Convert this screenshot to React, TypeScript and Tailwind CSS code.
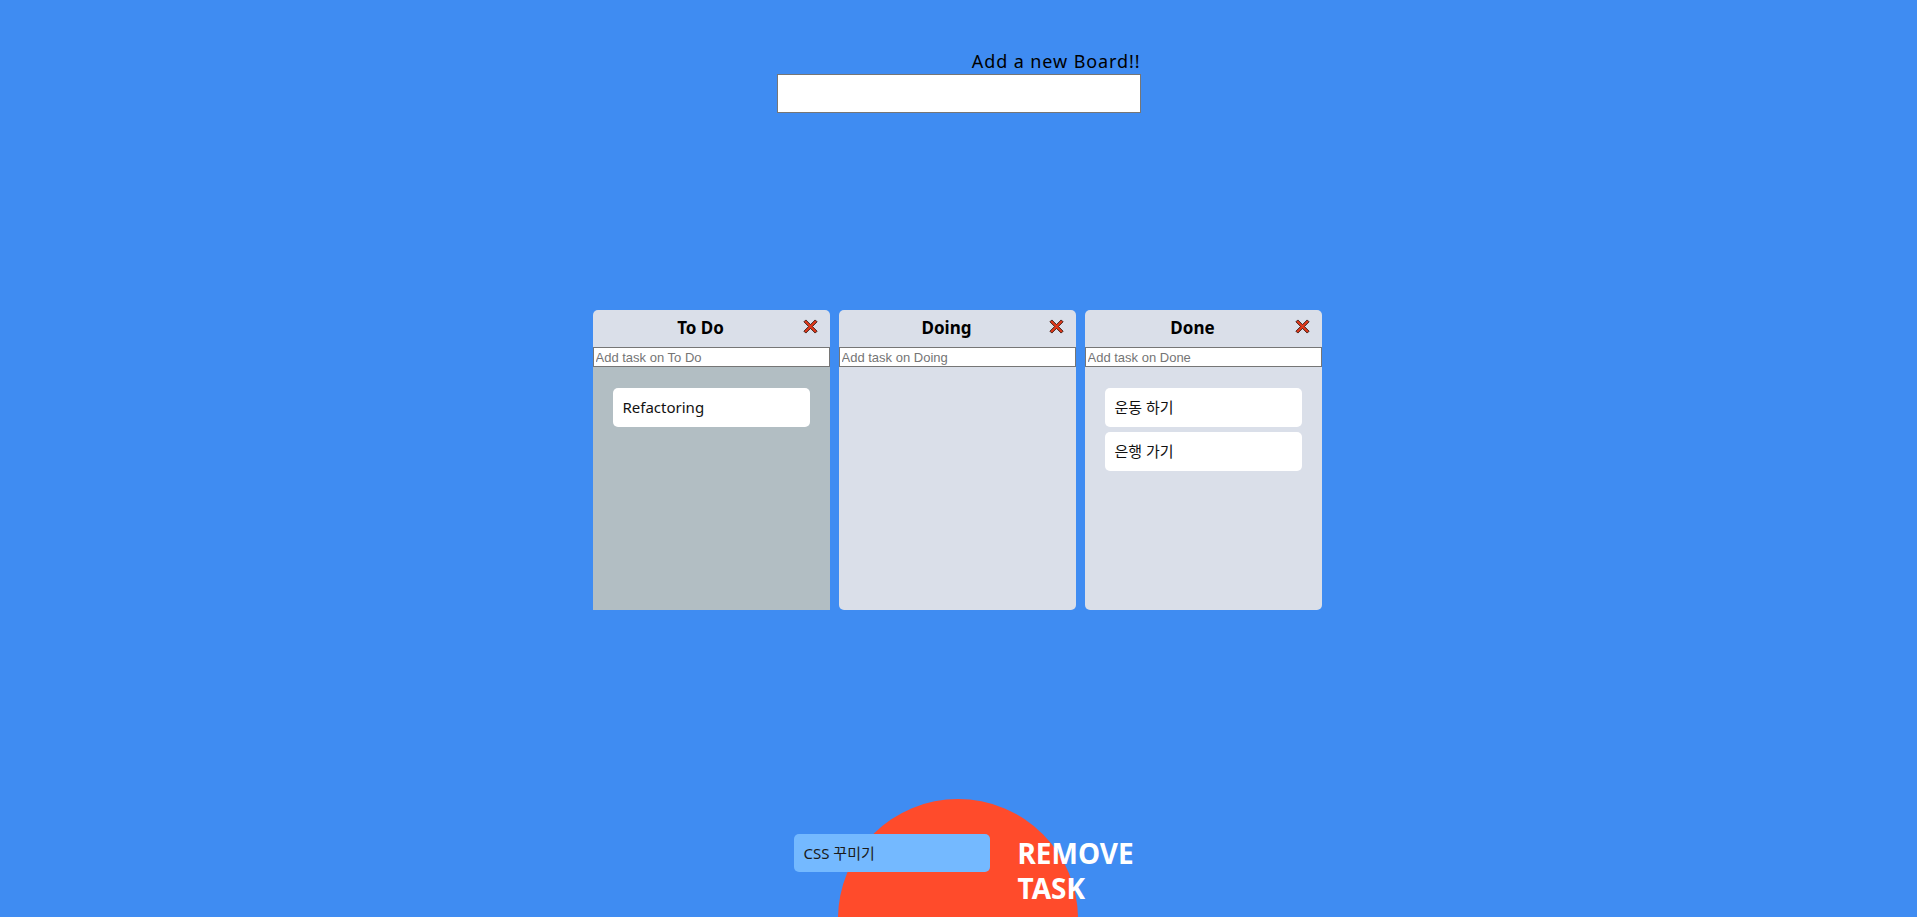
import React from "react";

type Board = { title: string; tasks: string[]; over?: boolean };

const boards: Board[] = [
  { title: "To Do", tasks: ["Refactoring"], over: true },
  { title: "Doing", tasks: [] },
  { title: "Done", tasks: ["운동 하기", "은행 가기"] },
];

const font = { fontFamily: '"Noto Sans", "Noto Sans CJK KR", sans-serif' };

const CrossIcon = () => (
  <svg width="15" height="15" viewBox="-1 -1 16 16">
    <polygon
      points="2,0 7,5 12,0 14,2 9,7 14,12 12,14 7,9 2,14 0,12 5,7 0,2"
      fill="#e2391b"
      stroke="#3b1a12"
      strokeWidth="1"
      strokeLinejoin="miter"
    />
  </svg>
);

const BoardColumn = ({ board }: { board: Board }) => (
  <div className="w-[237px] h-[300px] flex flex-col bg-[#dadfe9] rounded-[5px]">
    <div className="h-[37px] flex items-center">
      <h2 className="flex-1 pl-[6px] mb-[2px] text-center text-[17px] font-bold text-black">
        {board.title}
      </h2>
      <button className="w-[15px] h-[15px] mr-[12px] mb-[5px] flex items-center justify-center">
        <CrossIcon />
      </button>
    </div>
    <input
      className="w-full h-[20px] px-[2px] border border-[#767676] bg-white text-[13px] text-black placeholder:text-[#757575] outline-none"
      style={{ fontFamily: '"Liberation Sans", Arial, sans-serif' }}
      placeholder={`Add task on ${board.title}`}
    />
    <div
      className={`flex-1 flex flex-col gap-[5px] px-[20px] pt-[21px] pb-[20px] ${
        board.over ? "bg-[#b2bec3]" : ""
      }`}
    >
      {board.tasks.map((t) => (
        <div
          key={t}
          className="h-[39px] px-[10px] flex items-center bg-white rounded-[5px] text-[15px] text-[#111]"
        >
          {t}
        </div>
      ))}
    </div>
  </div>
);

export default function App() {
  return (
    <div
      className="h-screen w-full overflow-hidden bg-[#3f8cf2] grid grid-rows-[1fr_auto_1fr]"
      style={font}
    >
      <div className="flex justify-center pt-[49px]">
        <form className="flex flex-col items-end">
          <label className="text-[18px] leading-[25px] text-black tracking-[0.9px]">
            Add a new Board!!
          </label>
          <input className="w-[364px] h-[39px] border border-[#767676] bg-white outline-none" />
        </form>
      </div>

      <div className="flex justify-center gap-[9px] mt-[3px] mr-[3px]">
        {boards.map((b) => (
          <BoardColumn key={b.title} board={b} />
        ))}
      </div>

      <div className="flex justify-center items-end">
        <div className="relative w-[240px] h-[240px] rounded-full bg-[#ff4b2b] translate-y-[122px] -translate-x-[1px]">
          <div className="absolute left-[-44px] top-[35px] w-[196px] h-[38px] px-[10px] flex items-center bg-[#74b9ff] rounded-[5px] text-[15px] text-[#1a1a1a]">
            CSS 꾸미기
          </div>
          <div className="absolute left-[180px] top-[37px] text-white font-bold text-[28px] leading-[35px] whitespace-nowrap">
            <div>REMOVE</div>
            <div>TASK</div>
          </div>
        </div>
      </div>
    </div>
  );
}
